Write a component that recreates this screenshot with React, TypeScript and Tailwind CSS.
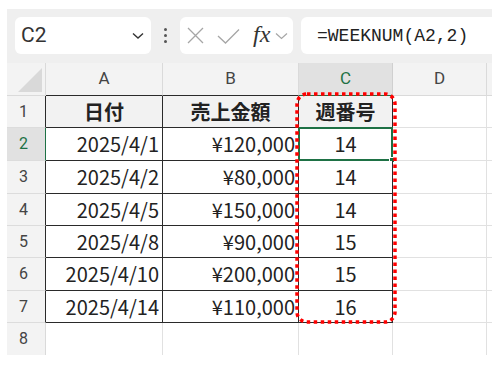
import React from "react";

type Row = { n: number; a: string; b: string; c: string; header?: boolean; h: string };

const rows: Row[] = [
  { n: 1, a: "日付", b: "売上金額", c: "週番号", header: true, h: "h-[32px]" },
  { n: 2, a: "2025/4/1", b: "¥120,000", c: "14", h: "h-[33px]" },
  { n: 3, a: "2025/4/2", b: "¥80,000", c: "14", h: "h-[33px]" },
  { n: 4, a: "2025/4/5", b: "¥150,000", c: "14", h: "h-[32px]" },
  { n: 5, a: "2025/4/8", b: "¥90,000", c: "15", h: "h-[32px]" },
  { n: 6, a: "2025/4/10", b: "¥200,000", c: "15", h: "h-[33px]" },
  { n: 7, a: "2025/4/14", b: "¥110,000", c: "16", h: "h-[32px]" },
];

const cellFont = "font-['Noto_Sans_CJK_JP','Noto_Sans',sans-serif]";
const uiFont = "font-['Roboto','Noto_Sans',sans-serif]";

export default function App() {
  return (
    <div className="relative w-[500px] h-[365px] bg-white pt-[9px] pl-[7px]">
      <div className="w-[485px] h-[346px] bg-[#efefef] flex flex-col overflow-hidden">
        {/* Formula bar */}
        <div className="h-[54px] flex items-start pt-[8px] pl-[8px] shrink-0">
          <div className="w-[136px] h-[37px] bg-white rounded-[6px] flex items-center justify-between pl-[6px] pr-[7px]">
            <span className={`${uiFont} text-[21px] text-[#333] leading-none`}>C2</span>
            <svg width="12" height="8" viewBox="0 0 12 8">
              <path d="M1 1.5 L6 6 L11 1.5" fill="none" stroke="#333" strokeWidth="1.4" />
            </svg>
          </div>
          <div className="w-[29px] h-[37px] flex flex-col items-center justify-center gap-[3px]">
            <div className="w-[3px] h-[3px] rounded-full bg-[#555]" />
            <div className="w-[3px] h-[3px] rounded-full bg-[#555]" />
            <div className="w-[3px] h-[3px] rounded-full bg-[#555]" />
          </div>
          <div className="w-[113px] h-[37px] bg-white rounded-[6px] flex items-center pl-[7px]">
            <svg width="17" height="17" viewBox="0 0 17 17">
              <path d="M1 1 L16 16 M16 1 L1 16" fill="none" stroke="#a6a6a6" strokeWidth="1.3" />
            </svg>
            <svg width="23" height="16" viewBox="0 0 23 16" className="ml-[13px]">
              <path d="M1 8 L8.5 15 L22 1.5" fill="none" stroke="#a6a6a6" strokeWidth="1.3" />
            </svg>
            <span className="ml-[13px] font-['Liberation_Serif',serif] italic text-[24px] text-[#333] leading-none -mt-[3px]">
              fx
            </span>
            <svg width="13" height="8" viewBox="0 0 13 8" className="ml-[5px]">
              <path d="M1 1.5 L6.5 6.5 L12 1.5" fill="none" stroke="#a6a6a6" strokeWidth="1.2" />
            </svg>
          </div>
          <div className="ml-[8px] flex-1 h-[37px] bg-white rounded-l-[6px] flex items-center pl-[16px]">
            <span className="font-['Liberation_Mono',monospace] text-[18px] text-[#222] leading-none">
              =WEEKNUM(A2,2)
            </span>
          </div>
        </div>

        {/* Column headers */}
        <div className={`flex h-[33px] shrink-0 ${uiFont} text-[17px] text-[#444]`}>
          <div className="w-[39px] bg-[#f3f3f3] border-r border-b border-[#dadada] flex items-end justify-end pr-[3px] pb-[3px]">
            <svg width="24" height="24" viewBox="0 0 24 24">
              <path d="M24 0 L24 24 L0 24 Z" fill="#d9d9d9" />
            </svg>
          </div>
          <div className="w-[117px] bg-[#f3f3f3] border-r border-[#dadada] border-b border-b-[#2a2a2a] flex items-center justify-center">A</div>
          <div className="w-[136px] bg-[#f3f3f3] border-r border-[#dadada] border-b border-b-[#2a2a2a] flex items-center justify-center">B</div>
          <div className="w-[94px] bg-[#e1e1e1] border-r border-[#d0d0d0] border-b border-b-[#1e7145] text-[#1e7145] flex items-center justify-center">C</div>
          <div className="w-[94px] bg-[#f3f3f3] border-r border-b border-[#dadada] flex items-center justify-center">D</div>
          <div className="w-[5px] bg-[#f3f3f3] border-b border-[#dadada]" />
        </div>

        {/* Data rows */}
        {rows.map((r) => {
          const sel = r.n === 2;
          const fill = r.header ? "bg-[#f2f2f2]" : "bg-white";
          const weight = r.header ? "font-bold" : "font-normal";
          return (
            <div key={r.n} className={`flex ${r.h} shrink-0`}>
              <div
                className={`w-[39px] ${uiFont} text-[16px] border-b border-b-[#dcdcdc] border-r flex items-center justify-center pr-[5px] ${
                  sel ? "bg-[#e1e1e1] text-[#1e7145] border-r-[#1e7145]" : "bg-[#f3f3f3] text-[#444] border-r-[#2a2a2a]"
                }`}
              >
                {r.n}
              </div>
              <div
                className={`w-[117px] ${fill} ${cellFont} ${weight} text-[20px] text-[#222] border-r border-b border-[#2a2a2a] flex items-center ${
                  r.header ? "justify-center" : "justify-end pr-[3px]"
                }`}
              >
                {r.a}
              </div>
              <div
                className={`w-[136px] ${fill} ${cellFont} ${weight} text-[20px] text-[#222] border-r border-b border-[#2a2a2a] flex items-center ${
                  r.header ? "justify-center" : "justify-end pr-[3px]"
                }`}
              >
                {r.b}
              </div>
              <div
                className={`relative w-[94px] ${fill} ${cellFont} ${weight} text-[20px] text-[#222] border-r border-b border-[#2a2a2a] flex items-center justify-center`}
              >
                {r.c}
                {sel && (
                  <>
                    <div className="absolute -top-[1px] -left-[1px] -right-[1px] -bottom-[1px] border-2 border-[#1e7145]" />
                    <div className="absolute -right-[3px] -bottom-[3px] w-[6px] h-[6px] bg-[#1e7145] border border-white" />
                  </>
                )}
              </div>
              <div className="w-[94px] bg-white border-r border-b border-[#e1e1e1]" />
              <div className="w-[5px] bg-white border-b border-[#e1e1e1]" />
            </div>
          );
        })}

        {/* Row 8 */}
        <div className="flex h-[32px] shrink-0">
          <div className={`w-[39px] ${uiFont} text-[16px] text-[#444] bg-[#f3f3f3] border-r border-[#dadada] flex items-center justify-center pr-[5px]`}>
            8
          </div>
          <div className="w-[117px] bg-white border-r border-[#e1e1e1]" />
          <div className="w-[136px] bg-white border-r border-[#e1e1e1]" />
          <div className="w-[94px] bg-white border-r border-[#e1e1e1]" />
          <div className="w-[94px] bg-white border-r border-[#e1e1e1]" />
          <div className="w-[5px] bg-white" />
        </div>
      </div>

      {/* Red dotted annotation */}
      <svg className="absolute left-0 top-0 pointer-events-none" width="500" height="365">
        <rect
          x="297"
          y="94"
          width="98"
          height="228"
          rx="10"
          fill="none"
          stroke="#ff0000"
          strokeWidth="3.5"
          strokeDasharray="3.5 3.5"
        />
      </svg>
    </div>
  );
}
